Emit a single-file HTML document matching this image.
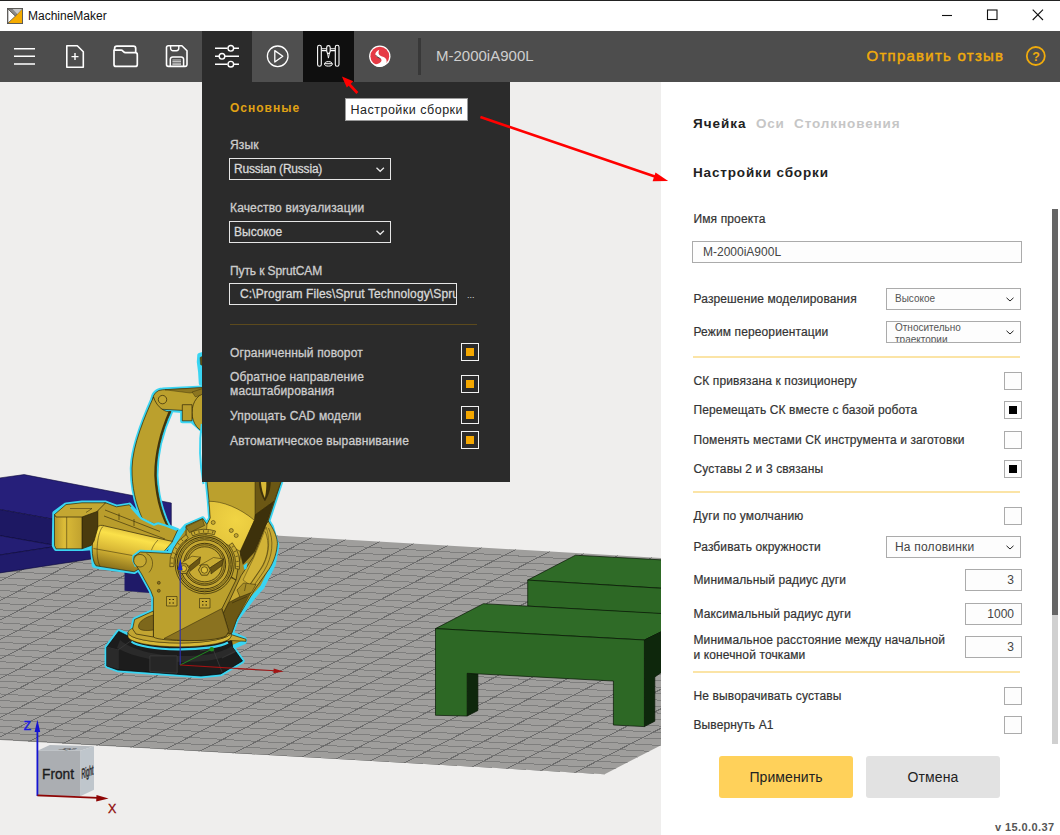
<!DOCTYPE html>
<html lang="ru">
<head>
<meta charset="utf-8">
<title>MachineMaker</title>
<style>
*{box-sizing:border-box;margin:0;padding:0}
html,body{width:1060px;height:835px;overflow:hidden;background:#efeeed}
body{font-family:"Liberation Sans",sans-serif;font-size:12px;color:#333;position:relative}
.abs{position:absolute}
#titlebar{left:0;top:0;width:1060px;height:31px;background:#fff;border-top:1px solid #222}
#titlebar .ttl{left:28px;top:7px;font-size:12px;color:#111;line-height:16px;white-space:nowrap}
#toolbar{left:0;top:31px;width:1060px;height:51px;background:#4d4d4d}
.tb{top:0;height:51px;width:51px}
#viewport{left:0;top:82px;width:661px;height:753px;background:#efeeed;overflow:hidden}
#drop{left:202px;top:82px;width:308px;height:399.500px;background:#2b2b2b;color:#cfcfcf}
#drop .lbl{left:28px;white-space:nowrap;font-size:12px;line-height:14px;color:#cdcdcd;letter-spacing:.15px;-webkit-text-stroke:.3px #cdcdcd}
#drop .sel{left:27px;height:22px;border:1px solid #e6e6e6;color:#d8d8d8;font-size:12px;line-height:20px;padding-left:4px;white-space:nowrap;overflow:hidden;-webkit-text-stroke:.3px #d8d8d8}
#drop .cb{left:259px;width:18px;height:18px;border:1px solid #f2f2f2}
#drop .cb i{position:absolute;left:4px;top:4px;width:8px;height:8px;background:#f5a800}
#right{left:661px;top:82px;width:399px;height:753px;background:#fff}
#right .lbl{left:32.500px;white-space:nowrap;font-size:12px;line-height:14px;color:#333;letter-spacing:.12px;-webkit-text-stroke:.2px #333}
#right .hr{left:32px;width:327px;height:2px;background:#fbe4a6}
#right .cb{left:343px;width:18px;height:18px;border:1px solid #ababab;background:#fdfdfd}
#right .cb i{position:absolute;left:4px;top:4px;width:8px;height:8px;background:#000}
#right .inp{border:1px solid #ababab;background:#fdfdfd;color:#444;white-space:nowrap;overflow:hidden}
</style>
</head>
<body>
<!-- TITLEBAR -->
<div id="titlebar" class="abs">
<svg class="abs" style="left:7px;top:6.500px" width="16" height="16" viewBox="0 0 17 17"><rect x=".5" y=".5" width="16" height="16" fill="#f5ab00" stroke="#555"/><polygon points="1,1 1,16 9,8.5" fill="#fff" stroke="#555" stroke-width=".8"/><polygon points="1,1 16,1 9,8.5" fill="#8a8a8a" stroke="#555" stroke-width=".8"/><polygon points="6,1 16,1 11,6.4" fill="#c9c9c9"/></svg>
<div class="abs ttl">MachineMaker</div>
<svg class="abs" style="left:930px;top:0" width="130" height="30" viewBox="0 0 130 30" fill="none" stroke="#111" stroke-width="1.1"><path d="M12 14.5h10"/><rect x="57.5" y="9" width="9.5" height="9.500"/><path d="M102.700 8.700l10.300 10.300M113 8.700l-10.300 10.300"/></svg>
</div>
<!-- TOOLBAR -->
<div id="toolbar" class="abs">
<div class="abs tb" style="left:202px;background:#2b2b2b"></div>
<div class="abs tb" style="left:252px;background:#4f4f4f;width:52px"></div>
<div class="abs tb" style="left:303px;background:#0f0f0f"></div>
<div class="abs" style="left:418px;top:7px;width:3px;height:37px;background:#383838"></div>
<div class="abs" id="ptitle" style="left:436px;top:16px;font-size:15px;line-height:18px;color:#cfcfcf;white-space:nowrap;letter-spacing:0">M-2000iA900L</div>
<div class="abs" id="fb" style="left:866.500px;top:16px;font-size:15px;line-height:18px;color:#f0ab0c;white-space:nowrap;-webkit-text-stroke:.45px #f0ab0c;letter-spacing:1.250px">Отправить отзыв</div>
<svg class="abs" style="left:0;top:0" width="1060" height="51" viewBox="0 31 1060 51" fill="none" stroke="#fff" stroke-width="1.6">
<g id="ico-menu"><path d="M14 48.700h21M14 56.300h21M14 64h21" stroke-width="1.500"/></g>
<g id="ico-new"><path d="M66.800 45.800h10.500l6 6v15.400h-16.500z" stroke-linejoin="round"/><path d="M71.500 56.600h7M75 53.100v7" stroke-width="1.400"/></g>
<g id="ico-open" stroke-width="1.700" stroke-linejoin="round"><path d="M114.600 50v-1.500a2.300 2.300 0 0 1 2.300-2.300h16.500a2.300 2.300 0 0 1 2.300 2.300v4"/><path d="M114 50.200h7.200c1.800 0 2.200 2.500 4.300 2.500h9.800a2 2 0 0 1 2 2v9.700a2 2 0 0 1-2 2h-19.300a2 2 0 0 1-2-2z"/></g>
<g id="ico-save" stroke-width="1.600" stroke-linejoin="round"><path d="M168.300 45.700h13.600l5.100 5.100v13.800a1.800 1.800 0 0 1-1.800 1.800h-16.900a1.800 1.800 0 0 1-1.800-1.800v-17.100a1.800 1.800 0 0 1 1.800-1.800z"/><path d="M170.600 45.700v2.600a2.400 2.400 0 0 0 2.400 2.400h3.400a2.400 2.400 0 0 0 2.400-2.400v-2.600" stroke-width="1.400"/><path d="M170.300 66.300v-7a2.400 2.400 0 0 1 2.400-2.400h8.500a2.400 2.400 0 0 1 2.400 2.400v7" stroke-width="1.500"/><path d="M172.400 60h8.600M172.400 61.600h8.600M172.400 63.200h8.600M172.400 64.700h8.600" stroke-width=".9" stroke="#ddd"/></g>
<g id="ico-set"><path d="M215 48.300h12.500M234 48.300h5M215 56.300h4M225 56.300h14M215 64.200h12.500M234 64.200h5" stroke-width="1.600"/><circle cx="230.800" cy="48.300" r="2.800" stroke-width="1.400"/><circle cx="222" cy="56.300" r="2.800" stroke-width="1.400"/><circle cx="230.800" cy="64.200" r="2.800" stroke-width="1.400"/></g>
<g id="ico-play"><circle cx="277.700" cy="56.300" r="10.300" stroke-width="1.300"/><path d="M274.800 50.600v11.400l8-5.700z" stroke-width="1.300" stroke-linejoin="round"/></g>
<g id="ico-cell" stroke-width="1.100"><rect x="317.600" y="45.300" width="3.700" height="21" rx="1.800"/><rect x="335.300" y="45.300" width="3.700" height="21" rx="1.800"/><path d="M321.500 48.700h5M330.400 48.700h4.800M321.500 50.600h5M330.400 50.600h4.800"/><path d="M326.700 47.500a1.750 1.900 0 0 1 3.500 0v3.700l-.8 2.200h-1.900l-.8-2.200z"/><path d="M327.500 53.400l.95 4.700.95-4.700" stroke-width=".9"/><path d="M324.500 64.200c0-1.600 1.300-2.600 3.900-2.600s3.900 1 3.900 2.600c0 1.300-1.600 1.900-3.900 1.900s-3.900-.6-3.900-1.900zM324.800 63.700h7.200" stroke-width="1"/></g>
<g id="ico-s" stroke="none"><circle cx="379.800" cy="56.200" r="10.700" fill="#fff"/><circle cx="379.800" cy="56.200" r="9.400" fill="#e63a45"/><path d="M379.300 49.800c-2.600 1.200-4.300 3-3.900 4.900.5 2.200 3.200 2.800 5 3.900 1.400.9 1.500 2.100.4 3.300-1.800 1.800-5 2.500-7.600 2.600a9.400 9.400 0 0 0 12.800.1c.8-2.100 1.300-4.800-.8-6.600-1.700-1.500-4.700-1.600-6-3.200-1.100-1.400-.6-3.400.1-5z" fill="#fff"/><path d="M375.800 55.200c.9 1.900 3.100 2.400 4.700 3.500" stroke="#222" stroke-width=".8" fill="none"/></g>
<g id="ico-help" stroke="#f0ab0c"><circle cx="1035.800" cy="56" r="9" stroke-width="1.800"/></g>
</svg>
<div class="abs" style="left:1030px;top:17.500px;width:12px;text-align:center;font-size:12.500px;line-height:16px;font-weight:bold;color:#f0ab0c">?</div>
</div>
<!-- VIEWPORT -->
<div id="viewport" class="abs">
<svg id="scene" class="abs" style="left:0;top:0" width="661" height="753" viewBox="0 82 661 753">
<defs><clipPath id="fc"><polygon points="-40,516.9 700,560.3 700,725.1 604.6,774.2 -40,737.7"/></clipPath>
<linearGradient id="gm" x1="0" y1="0" x2="0" y2="1"><stop offset="0" stop-color="#d9bb3a"/><stop offset=".25" stop-color="#f7dc45"/><stop offset=".6" stop-color="#d8b636"/><stop offset="1" stop-color="#8f7420"/></linearGradient>
<linearGradient id="gc" x1="0" y1="0" x2="1" y2="0"><stop offset="0" stop-color="#c8a730"/><stop offset=".45" stop-color="#d2b135"/><stop offset="1" stop-color="#7d6519"/></linearGradient>
</defs>
<polygon points="-40,516.9 700,560.3 700,725.1 604.6,774.2 -40,737.7" fill="#9f9e9c"/>
<g clip-path="url(#fc)" fill="none" shape-rendering="crispEdges"><path d="M-40 523.4 L700 566.6M-40 529.9 L700 573.1M-40 536.4 L700 579.6M-40 542.8 L700 586.1M-40 549.3 L700 592.5M-40 555.8 L700 599M-40 562.2 L700 605.5M-40 568.7 L700 611.9M-40 575.2 L700 618.4M-40 581.7 L700 624.9M-40 588.1 L700 631.3M-40 594.6 L700 637.8M-40 601.1 L700 644.3M-40 607.5 L700 650.8M-40 614 L700 657.2M-40 620.5 L700 663.7M-40 626.9 L700 670.2M-40 633.4 L700 676.6M-40 639.9 L700 683.1M-40 646.4 L700 689.6M-40 652.8 L700 696M-40 659.3 L700 702.5M-40 665.8 L700 709M-40 672.2 L700 715.5M-40 678.7 L700 721.9M-40 685.2 L700 728.4M-40 691.6 L700 734.9M-40 698.1 L700 741.3M-40 704.6 L700 747.8M-40 711.1 L700 754.3M-40 717.5 L700 760.7M-40 724 L700 767.2M-40 730.5 L700 773.7M-40 736.9 L700 780.2M-40 743.4 L700 786.6M-40 749.9 L700 793.1M-40 756.3 L700 799.6M-40 762.8 L700 806M-40 769.3 L700 812.5M-40 775.8 L700 819M-40 782.2 L700 825.4" stroke="#7e7e7d" stroke-width="1"/>
<path d="M-96.3 513.6L-616.3 781.4M-62.3 515.6L-582.3 783.4M-28.3 517.6L-548.3 785.4M5.7 519.6L-514.3 787.4M39.7 521.6L-480.3 789.4M73.7 523.6L-446.3 791.4M107.7 525.6L-412.3 793.4M141.7 527.6L-378.3 795.4M175.7 529.6L-344.3 797.4M209.7 531.6L-310.3 799.4M243.7 533.6L-276.3 801.4M277.7 535.6L-242.3 803.4M311.7 537.6L-208.3 805.4M345.7 539.6L-174.3 807.4M379.7 541.5L-140.3 809.3M413.7 543.5L-106.3 811.3M447.7 545.5L-72.3 813.3M481.7 547.5L-38.3 815.3M515.7 549.5L-4.3 817.3M549.7 551.5L29.7 819.3M583.7 553.5L63.7 821.3M617.7 555.5L97.7 823.3M651.7 557.5L131.7 825.3M685.7 559.5L165.7 827.3M719.7 561.5L199.7 829.3M753.7 563.5L233.7 831.3M787.7 565.5L267.7 833.3M821.7 567.4L301.7 835.2M855.7 569.4L335.7 837.2M889.7 571.4L369.7 839.2M923.7 573.4L403.7 841.2M957.7 575.4L437.7 843.2M991.7 577.4L471.7 845.2M1025.7 579.4L505.7 847.2M1059.7 581.4L539.7 849.2M1093.7 583.4L573.7 851.2M1127.7 585.4L607.7 853.2M1161.7 587.4L641.7 855.2M1195.7 589.4L675.7 857.2M1229.7 591.4L709.7 859.2M1263.7 593.3L743.7 861.1M1297.7 595.3L777.7 863.1M1331.7 597.3L811.7 865.1M1365.7 599.3L845.7 867.1M1399.7 601.3L879.7 869.1M1433.7 603.3L913.7 871.1" stroke="#6c6c6c" stroke-width="1"/></g>

<g stroke="#0d0a3a" stroke-width=".6" stroke-linejoin="round">
<polygon points="-2,478.200 24.100,474.600 171.300,503 171.300,540 53,519.200 -2,509.200" fill="#261f7a"/>
<polygon points="-2,509.200 53,519.200 171.300,540 124,545 53,545 -2,535.300" fill="#1d1863"/>
<polygon points="124.500,540 171.300,540 171.300,594.800 124.500,590.800" fill="#1f1a68" stroke="none"/>
<polygon points="-2,535.300 53,545 56,546.400 -2,555.300" fill="#241e74"/>
<polygon points="-2,555.300 56,546.400 124,545 124,554 -2,573.200" fill="#201b6b"/>
</g>

<g stroke="#071505" stroke-width=".7" stroke-linejoin="round">
<polygon points="527.700,580.100 575.500,555.200 662,559.900 662,588.300" fill="#2f6b27"/>
<polygon points="527.700,580.100 662,588.300 662,614 527.700,606.100" fill="#2d6825"/>
<polygon points="435.500,628.600 483.400,603.700 662,613.500 662,631.400 644.400,640" fill="#2f6b27"/>
<polygon points="644.400,640 662,631.400 662,672 654.800,677 654.800,721.200 644.400,726.600" fill="#0e270c"/>
<polygon points="467.200,673.300 477.900,673.900 477.900,710.500 467.200,716" fill="#0e270c"/>
<polygon points="435.500,628.600 644.400,640 644.400,726.600 613.400,725 613.400,681 467.200,673.300 467.200,716 435.500,715.300" fill="#2d6825"/>
</g>


<defs>
<g id="sil">
<path d="M153.500 397C145 416 132.500 445 132 468C131.800 487 135.500 503 142.500 519L171 531C163 517 157.500 498 156.300 476C156 455 161.500 432 171 411.500Z"/>
<path d="M162.500 389.800L203 387.600V431L192 421H182.300V410.700L162.500 409.300A9.700 9.700 0 0 1 162.500 389.800Z"/>
<path d="M199.500 355L203 354V383.500H201L200.300 372 199 362Z"/>
<path d="M54.500 513L66 504.600 82 502.800 105.600 502.800 116.400 506.800 129.300 504.800 141.500 518.500 154 524.700 158.100 523 166.400 525.800 177.500 530.300 172.500 541 160 555 134.200 571.800 100 567 94 565.500 92 548 82 548.800 56 548.800 54 545.500Z"/>
<path d="M207 481H281.300L268.200 521 271.700 526.600 277.200 545.500 273.600 564.300 262.300 587 254.400 595.800 236.600 619.500 231.600 633.400 244.500 639 244.500 642 232.600 647.300 242.500 661 220.700 674 201 676 117.700 670 106.800 666 106.800 647.300 118.700 631.400 128.600 635 132.600 629 134.600 619.500 153.400 611 153.400 597.700 150.800 590.800 141 573 134 562 134 556.500 140.500 552 169.500 553.500 172.600 541 186.100 525.800 202.700 518.500 207 524.500 210.300 518 209 501Z"/>
</g>
<linearGradient id="gmot" gradientUnits="userSpaceOnUse" x1="128" y1="527" x2="118" y2="572"><stop offset="0" stop-color="#d6b636"/><stop offset=".22" stop-color="#fbe14a"/><stop offset=".55" stop-color="#d9b836"/><stop offset="1" stop-color="#806818"/></linearGradient>
<linearGradient id="gcw" gradientUnits="userSpaceOnUse" x1="54" y1="0" x2="83" y2="0"><stop offset="0" stop-color="#b3952a"/><stop offset=".35" stop-color="#dcbc38"/><stop offset="1" stop-color="#bfa02e"/></linearGradient>
<radialGradient id="gdome" gradientUnits="userSpaceOnUse" cx="236" cy="520" r="46"><stop offset="0" stop-color="#f1d444"/><stop offset="1" stop-color="#dcbc38"/></radialGradient>
</defs>
<use href="#sil" fill="#a88e28" stroke="#3ad5f2" stroke-width="4.400" stroke-linejoin="round"/>
<g stroke="#2e2508" stroke-width=".7" stroke-linejoin="round">

<path d="M199.500 355L203 354V383.500H201L200.300 372 199 362Z" fill="#3ad5f2" stroke="none"/><path d="M200 357.500L203 356V366L200.500 364.500Z" fill="#5e4c12" stroke-width=".4"/>
<path d="M162.500 389.800L203 387.600V411.500L162.500 409.300A9.700 9.700 0 0 1 162.500 389.800Z" fill="#bba02d"/>
<path d="M165 389.800L203 387.600V391L190 393Z" fill="#8d7620" stroke-width=".4"/>
<circle cx="162.500" cy="399.600" r="4.200" fill="#c2a631"/>
<ellipse cx="208" cy="412.500" rx="16" ry="20" fill="#bba02d"/>
<path d="M192 392L203 388.500V394L195.500 397Z" fill="#8d7620" stroke-width=".4"/>
<rect x="182.300" y="404.700" width="9.700" height="16.100" fill="#b99d2c"/>
<path d="M201.800 424C199.300 440 199.500 462 203.500 484" fill="none" stroke="#3ad5f2" stroke-width="2"/>

<path d="M153.500 397C145 416 132.500 445 132 468C131.800 487 135.500 503 142.500 519L171 531C163 517 157.500 498 156.300 476C156 455 161.500 432 171 411.500C166 413 157 408 153.500 397Z" fill="#bba02d"/>
<path d="M171 411.500C161.500 432 156 455 156.300 476C157.500 498 163 517 171 531L168.800 530C161 517 155.300 498 154.300 476C154 455 159.500 432 168.800 411Z" fill="#3f330c" stroke="none"/>

<path d="M97 505L105.600 502.800 116.400 506.800 129.300 504.800 141.500 518.500 154 524.700 158.100 523 166.400 525.800 177.500 530.300 172.500 541 160 548 104 527 97 540Z" fill="#b99d2c"/>
<path d="M105 510L160 531.500M104 516L165 539M119 513.500V520M134 519V526" fill="none" stroke-width=".6"/>
<path d="M131 507L141.500 518.500 154 524.700 158.100 523.200 166.400 525.800 177 530" fill="none" stroke="#3ad5f2" stroke-width="2.200" stroke-linejoin="round"/>

<path d="M104.200 525.800L162.300 539.200 172.600 541.500 160 556 134.200 571.800 96 565.800C91 560 90.500 537 97 527.500C99 525 102 525 104.200 525.800Z" fill="url(#gmot)"/>
<path d="M93.500 548.500L132.500 555.500M158 540C153 545 150.500 551 150 557M103.500 526C97.500 530 94.500 556 100 566.300" fill="none" stroke-width=".5"/>

<path d="M82 513L97.800 506V528L94 541 91 545.500 82 548.800Z" fill="#4a3b0e"/>
<path d="M54.500 514.500V545.500L56 548.800H82V516Z" fill="url(#gcw)"/>
<path d="M54.500 514.500L66 504.600 82 502.800 105.600 502.800 97 511.500 82 517H56Z" fill="#c4a732"/>
<path d="M66.700 517V548.800M70 508.500H92L86 512.500" fill="none" stroke-width=".5"/>
</g>

<g stroke="#2e2508" stroke-width=".7" stroke-linejoin="round">

<path d="M118.700 631.400L106.800 647.300V666L117.700 670 201 676 220.700 674 242.500 661 232.600 647.300 231 636 128 636Z" fill="#1c1c1c" stroke="#000"/>
<path d="M120 640C135 652 160 656 185 656S222 652 232 646L236 652C224 659 205 662 183 662S135 658 117 648Z" fill="#2a2a2a" stroke="none"/><path d="M106.800 647.300L118 650 132 640M118 650V669M150 656H177V673L150 671.500ZM200 651L213 649 222 672M222 658L236 651" fill="none" stroke="#3a3a3a" stroke-width=".8"/>
<path d="M150 656H177V673L150 671.500Z" fill="#262626" stroke="#3a3a3a"/>
<path d="M106.800 647.300L118 650V669L106.800 666Z" fill="#2a2a2a" stroke="none"/>

<path d="M131.500 641.500A50 10 0 0 0 228 642.500" fill="none" stroke="#3ad5f2" stroke-width="2.200"/>
<path d="M128 632.500V636.300A51.500 10.500 0 0 0 231 636.300V634.500L246 639.300V641.300L230 640.500" fill="#c8aa33"/>
<path d="M128 632.500A51.500 10.500 0 0 0 231 632.500L231 636.300A51.500 10.500 0 0 1 128 636.300Z" fill="#d6b838" stroke-width=".5"/>
<path d="M128 632.500A51.500 10.500 0 0 1 231 632.500A51.500 10.500 0 0 1 128 632.500Z" fill="#c2a531" stroke-width=".5"/>

<path d="M268.200 521L271.700 526.600C276 534 278 541 277.200 545.500C276.500 555 272 566 267 572L255.600 588 236.600 619.500 231.600 633.400 226 634 223 614 228.700 602.600 241 575.800 253.600 556.600 266 524Z" fill="#c8aa33"/>
<path d="M259 545L266 527C270 538 270 552 263 566L250 585 243 580 253.600 558Z" fill="#d2b337" stroke-width=".4"/>
<path d="M268.500 528C274 540 273 556 264 571L251.500 589M265.300 531.500C270 543 268.700 556 260.500 569L248.500 586.500" fill="none" stroke-width=".5"/>
<path d="M223 614L228.700 602.600 240 596.500 251 592.500 243 607 236.600 619.500 231.600 633.400 226 634Z" fill="#6b5714" stroke-width=".5"/>
<path d="M237 590L243.500 583 256 584.500 251.500 592.500 240 597Z" fill="#a88e28" stroke-width=".5"/>
<path d="M246 584L244.500 591M232 603L247 596.500" fill="none" stroke-width=".5"/>

<path d="M136 566.500L133.500 561 133.500 556 140 551 170.500 552.300 176 541.500 183 531" fill="none" stroke="#3ad5f2" stroke-width="2.400" stroke-linejoin="round"/>
<path d="M134 556.500L140.500 552 169.500 553.500 186 556 236 580 222 608.600 228.700 631.400 226 636C215 642 160 642 153.400 637V597.700L150.800 590.800 141 573 134 562Z" fill="#bba02d"/>
<path d="M164 638.500L221.700 608.600 228.700 631.400 226 636C215 641 185 642 164 638.500Z" fill="#8a7220" stroke-width=".5"/>

<path d="M153.400 611L134.600 619.500 132.600 629 136 634 153.400 637Z" fill="#c2a531"/>
<path d="M153.400 615C146 617 139 621 138.500 626S146 631 153.400 630Z" fill="#7d671b" stroke-width=".5"/>

<circle cx="140" cy="560.700" r="6.300" fill="#c6a932" stroke-width=".6"/>
<path d="M146.500 553.500C153 556 155 566 149 572.500" fill="none" stroke-width=".5"/>
<circle cx="158.800" cy="582.800" r="1.500" fill="#8a7220" stroke-width=".5"/><circle cx="158.800" cy="590.800" r="1.500" fill="#8a7220" stroke-width=".5"/>
<rect x="166.500" y="596.500" width="10.500" height="9.500" fill="#c6a932" stroke-width=".6"/><rect x="199.500" y="598.500" width="10.500" height="9.500" fill="#c6a932" stroke-width=".6"/>
<path d="M169 599.500h1.500m2 0h1.500m-5 3.500h1.500m2 0h1.500M202 601.500h1.500m2 0h1.500m-5 3.500h1.500m2 0h1.500" stroke-width="1.200" fill="none"/>

<path d="M207 481H281.300L268.200 521 262 530 241.500 549 236 580 186.100 545 186.100 525.800 202.700 518.500 207 524.500 210.300 518 209 501Z" fill="#bba02d"/>
<path d="M209 501.300C222 501 240 508 254.400 520.300L241 551.600 226 544C214 538 206 536 206 536L207 524.500 210.300 518Z" fill="url(#gdome)" stroke-width=".5"/>
<path d="M255 481H281.300L274 501.300 255 515Z" fill="#6b5714" stroke-width=".5"/><path d="M274 501.300L268 519.700 254.400 552 243 564.300 240 551.600 254.400 520.300 255 515Z" fill="#3d310b" stroke-width=".5"/>
<path d="M259.300 481H270.400C270.400 490 267.800 496 264.900 500.700C261.800 496 259.300 489 259.300 481Z" fill="#3f330c" stroke-width=".5"/>
<path d="M260.800 481C261.300 488 263 494 264.900 498C266 493 266.500 487 266.300 481Z" fill="#d9b936" stroke="none"/>
<circle cx="213.200" cy="522.500" r="2" fill="#c6a932" stroke-width=".5"/><circle cx="231.300" cy="530.500" r="2" fill="#c6a932" stroke-width=".5"/><circle cx="236.200" cy="535.500" r="2" fill="#c6a932" stroke-width=".5"/>
<path d="M243.500 565.500L247.500 562.500 246.500 568.500 244.500 570Z" fill="#3ad5f2" stroke="none"/>

<path d="M185.800 527L202.300 519 204.500 525.500 189.500 532.500Z" fill="#8d7620" stroke-width=".5"/>

<path d="M169.8 566.7A35 35 0 0 1 186.2 534.6L188.3 538.0A31 31 0 0 0 173.8 566.5Z" fill="#c6a932" stroke-width=".6"/>
<path d="M191.0 532.1A35 35 0 0 1 215.5 531.0L214.3 534.8A31 31 0 0 0 192.6 535.8Z" fill="#c6a932" stroke-width=".6"/>
<path d="M232.3 542.8A35 35 0 0 1 239.4 569.2L235.4 568.6A31 31 0 0 0 229.1 545.2Z" fill="#c6a932" stroke-width=".6"/>
<path d="M172.9 563.2L170.5 563.1M173.5 558.2L171.1 557.8M174.8 553.4L172.6 552.6M176.9 548.9L174.8 547.7M179.6 544.7L177.8 543.2M183.0 541.0L181.4 539.3M194.9 534.1L194.1 531.8M199.2 533.0L198.8 530.6M203.6 532.5L203.5 530.1M208.0 532.7L208.3 530.3M212.4 533.4L213.0 531.1M231.7 547.4L233.7 546.2M234.0 551.9L236.2 550.9M235.6 556.6L237.9 556.0M236.4 561.5L238.8 561.3M236.4 566.5L238.8 566.7" fill="none" stroke-width=".6"/>

<circle cx="204.700" cy="564.300" r="29.500" fill="#b59a2b" stroke-width=".7"/><circle cx="204.700" cy="564.300" r="27.500" fill="#bba02d" stroke-width=".9"/><circle cx="204.700" cy="564.300" r="26" fill="none" stroke-width=".5"/>
<circle cx="204.700" cy="564.300" r="24.500" fill="#c3a631" stroke-width=".8"/>
<circle cx="204.700" cy="564.300" r="21" fill="#b3972a" stroke-width=".8"/>
<circle cx="204.700" cy="564.300" r="19.500" fill="none" stroke-width=".6"/><circle cx="204.700" cy="564.300" r="17.500" fill="#c8ab33" stroke-width=".7"/>
<path d="M179 564.500L192 556.200 200.500 557.200 189.500 566Z" fill="#c9ac33" stroke-width=".5"/><path d="M189.500 566L200.500 557.200 199.500 563.500 189.800 571.500Z" fill="#6b5714" stroke-width=".5"/><path d="M199.500 565.500L213.500 557.500 223.500 559 210.500 567.500Z" fill="#c9ac33" stroke-width=".5"/><path d="M210.500 567.500L223.500 559 222 565.500 211 574Z" fill="#6b5714" stroke-width=".5"/><polygon points="189.2,568.6 186.4,573.4 180.8,573.4 178.0,568.6 180.8,563.8 186.4,563.8" fill="#c4a731" stroke-width=".7"/><circle cx="183.600" cy="568.600" r="3" fill="#dcbe3a" stroke-width=".6"/><polygon points="210.4,570.0 207.4,575.2 201.4,575.2 198.4,570.0 201.4,564.8 207.4,564.8" fill="#c4a731" stroke-width=".7"/><circle cx="204.400" cy="570" r="3.200" fill="#dcbe3a" stroke-width=".6"/>
</g>

<path d="M180.200 665V567" stroke="#2b2fb0" stroke-width="1.100" fill="none"/><polygon points="180.200,558.500 177.800,570 182.600,570" fill="#1d2cc4"/>
<path d="M180.200 665L211.800 649.200" stroke="#1f8a1f" stroke-width="1" fill="none"/><circle cx="211.800" cy="649.200" r="2.300" fill="#1f8a1f"/>
<path d="M180.200 665L275 670.800" stroke="#a31212" stroke-width="1.100" fill="none"/><polygon points="283.700,671.400 273.700,668.500 273.400,673.300" fill="#a31212"/>


<g>
<polygon points="37.400,750.800 49.800,744.900 94,746.200 80.200,750.800" fill="#b7bcc1"/>
<polygon points="80.200,750.800 94,746.200 94,789.700 80.200,796.300" fill="#bfc6cc"/>
<rect x="37.400" y="750.800" width="42.800" height="45.500" fill="#abaeb2"/>
<text transform="translate(42,778.500) scale(.94,1)" font-family="'Liberation Sans',sans-serif" font-size="14.600" fill="#1c1c1c" stroke="#1c1c1c" stroke-width=".35">Front</text>
<text transform="translate(81.600,778.800) skewY(-20) scale(.36,1)" font-family="'Liberation Sans',sans-serif" font-size="14" fill="#222" stroke="#222" stroke-width=".5">Right</text>
<text transform="translate(56,749.700) scale(1,.3) skewX(-55)" font-family="'Liberation Sans',sans-serif" font-size="9" font-weight="bold" fill="#2a2a2a">Top</text>
<path d="M37.400 796V729" stroke="#1414d2" stroke-width="1.800" fill="none"/>
<polygon points="37.400,719.800 34.600,732 40.200,732" fill="#1414d2"/>
<path d="M37.400 795.300L98 797.900" stroke="#8e0505" stroke-width="1.800" fill="none"/>
<polygon points="108.600,798.500 96.500,795 96.200,801.400" fill="#8e0505"/>
<text x="23.800" y="729.900" font-family="'Liberation Sans',sans-serif" font-size="12" fill="#1a1ae0" stroke="#1a1ae0" stroke-width=".4">Z</text>
<text x="108" y="812.900" font-family="'Liberation Sans',sans-serif" font-size="12.500" fill="#8e0a0a" stroke="#8e0a0a" stroke-width=".3">X</text>
</g>

</svg>
</div>
<!-- DROPDOWN PANEL -->
<div id="drop" class="abs">
<div class="abs" id="d-h" style="left:28px;top:18px;font-size:12px;line-height:16px;font-weight:bold;color:#e0a214;letter-spacing:1px;white-space:nowrap">Основные</div>
<div class="abs lbl" id="d-l1" style="top:56px">Язык</div>
<div class="abs sel" style="top:76px;width:162px"><span id="d-s1" style="letter-spacing:-.2px">Russian (Russia)</span></div>
<div class="abs lbl" id="d-l2" style="top:119px">Качество визуализации</div>
<div class="abs sel" style="top:139px;width:162px"><span id="d-s2">Высокое</span></div>
<div class="abs lbl" id="d-l3" style="top:182px;letter-spacing:-.1px">Путь к SprutCAM</div>
<div class="abs sel" style="top:201px;width:228px;padding-left:10px"><span id="d-s3" style="letter-spacing:.12px">C:\Program Files\Sprut Technology\SprutCAM 15</span></div>
<div class="abs" style="left:265px;top:206px;font-size:9px;line-height:14px;color:#ddd;letter-spacing:0">...</div>
<svg class="abs" style="left:0;top:0" width="308" height="399" viewBox="202 82 308 399" fill="none" stroke="#e8e8e8" stroke-width="1.300"><path d="M376.500 167.800l3.700 3.500 3.700-3.500M376.500 230.800l3.700 3.500 3.700-3.500"/></svg>
<div class="abs" style="left:28px;top:242px;width:247px;height:1px;background:#5c4a1d"></div>
<div class="abs lbl" id="d-c1" style="top:264px">Ограниченный поворот</div>
<div class="abs lbl" id="d-c2" style="top:288px">Обратное направление<br>масштабирования</div>
<div class="abs lbl" id="d-c3" style="top:327px">Упрощать CAD модели</div>
<div class="abs lbl" id="d-c4" style="top:352px">Автоматическое выравнивание</div>
<div class="abs cb" style="top:261px"><i></i></div>
<div class="abs cb" style="top:293px"><i></i></div>
<div class="abs cb" style="top:324px"><i></i></div>
<div class="abs cb" style="top:349px"><i></i></div>
</div>
<!-- RIGHT PANEL -->
<div id="right" class="abs">
<div class="abs" id="r-t1" style="left:32px;top:33.500px;font-size:13.500px;line-height:16px;font-weight:bold;color:#222;letter-spacing:1px;white-space:nowrap">Ячейка</div>
<div class="abs" id="r-t2" style="left:95px;top:33.500px;font-size:13.500px;line-height:16px;font-weight:bold;color:#c6c6c6;letter-spacing:.8px;white-space:nowrap">Оси</div>
<div class="abs" id="r-t3" style="left:133px;top:33.500px;font-size:13.500px;line-height:16px;font-weight:bold;color:#c6c6c6;letter-spacing:.9px;white-space:nowrap">Столкновения</div>
<div class="abs" id="r-h" style="left:32px;top:82.500px;font-size:13.500px;line-height:16px;font-weight:bold;color:#222;letter-spacing:.85px;white-space:nowrap">Настройки сборки</div>
<div class="abs lbl" id="r-l1" style="top:130px">Имя проекта</div>
<div class="abs inp" style="left:31px;top:159px;width:330px;height:22px;font-size:12px;line-height:20px;padding-left:10px;color:#444"><span id="r-i1">M-2000iA900L</span></div>
<div class="abs lbl" id="r-l2" style="top:210px">Разрешение моделирования</div>
<div class="abs inp" style="left:225px;top:206px;width:135px;height:22px;font-size:10px;line-height:20px;padding-left:8px;color:#555"><span id="r-s1">Высокое</span></div>
<div class="abs lbl" id="r-l3" style="top:243px">Режим переориентации</div>
<div class="abs inp" style="left:225px;top:239px;width:135px;height:22px;font-size:10px;line-height:11.500px;padding-left:8px;color:#555;white-space:normal"><span id="r-s2">Относительно<br>траектории</span></div>
<div class="abs hr" style="top:274px"></div>
<div class="abs lbl" id="r-c1" style="top:292px">СК привязана к позиционеру</div>
<div class="abs cb" style="top:290px"></div>
<div class="abs lbl" id="r-c2" style="top:321px">Перемещать СК вместе с базой робота</div>
<div class="abs cb" style="top:319px"><i></i></div>
<div class="abs lbl" id="r-c3" style="top:351px">Поменять местами СК инструмента и заготовки</div>
<div class="abs cb" style="top:349px"></div>
<div class="abs lbl" id="r-c4" style="top:380px">Суставы 2 и 3 связаны</div>
<div class="abs cb" style="top:378px"><i></i></div>
<div class="abs hr" style="top:409px"></div>
<div class="abs lbl" id="r-c5" style="top:427px">Дуги по умолчанию</div>
<div class="abs cb" style="top:425px"></div>
<div class="abs lbl" id="r-l4" style="top:458px">Разбивать окружности</div>
<div class="abs inp" style="left:225px;top:454px;width:135px;height:22px;font-size:12px;line-height:20px;padding-left:8px;color:#444;letter-spacing:.2px"><span id="r-s3">На половинки</span></div>
<div class="abs lbl" id="r-l5" style="top:491px">Минимальный радиус дуги</div>
<div class="abs inp" style="left:304px;top:487px;width:57px;height:22px;font-size:12px;line-height:20px;padding-right:7px;text-align:right">3</div>
<div class="abs lbl" id="r-l6" style="top:525px">Максимальный радиус дуги</div>
<div class="abs inp" style="left:304px;top:521px;width:57px;height:22px;font-size:12px;line-height:20px;padding-right:7px;text-align:right">1000</div>
<div class="abs lbl" id="r-l7" style="top:551px;line-height:15px">Минимальное расстояние между начальной<br>и конечной точками</div>
<div class="abs inp" style="left:304px;top:554px;width:57px;height:22px;font-size:12px;line-height:20px;padding-right:7px;text-align:right">3</div>
<div class="abs hr" style="top:589px"></div>
<div class="abs lbl" id="r-c6" style="top:607px">Не выворачивать суставы</div>
<div class="abs cb" style="top:605px"></div>
<div class="abs lbl" id="r-c7" style="top:636px">Вывернуть A1</div>
<div class="abs cb" style="top:634px"></div>
<svg class="abs" style="left:0;top:0" width="399" height="753" viewBox="661 82 399 753" fill="none" stroke="#222" stroke-width="1"><path d="M1006.500 297.800l3.500 3.200 3.500-3.200M1006.500 330.800l3.500 3.200 3.500-3.200M1006.500 545.800l3.500 3.200 3.500-3.200"/></svg>
<div class="abs" style="left:391px;top:127px;width:6px;height:406px;background:#666"></div>
<div class="abs" style="left:391px;top:533px;width:6px;height:129px;background:#d0d0d0"></div>
<div class="abs" id="b-ok" style="left:58px;top:674px;width:134px;height:42px;border-radius:3px;background:#ffd15a;color:#222;font-size:14px;line-height:42px;text-align:center;letter-spacing:.1px">Применить</div>
<div class="abs" id="b-no" style="left:205px;top:674px;width:134px;height:42px;border-radius:3px;background:#e2e2e2;color:#222;font-size:14px;line-height:42px;text-align:center;letter-spacing:.1px">Отмена</div>
<div class="abs" id="r-v" style="left:334px;top:738px;font-size:11px;line-height:14px;font-weight:bold;color:#555;letter-spacing:.4px;white-space:nowrap">v 15.0.0.37</div>
</div>
<!-- OVERLAYS -->
<div id="overlay" class="abs" style="left:0;top:0;width:1060px;height:835px;pointer-events:none">
<div class="abs" id="tip" style="left:345px;top:98px;width:123px;height:23px;background:#fff;border:1px solid #9a9a9a;color:#222;font-size:12.500px;line-height:22px;padding-left:4.500px;white-space:nowrap;letter-spacing:.5px"><span id="tiptx">Настройки сборки</span></div>
<svg class="abs" style="left:0;top:0" width="1060" height="835" viewBox="0 0 1060 835"><g fill="#ff0000" stroke="#ff0000"><path d="M357.400 93L348.500 83.500" stroke-width="2.600" fill="none"/><polygon points="341.900,76.600 353.300,81.300 346.800,87.400" stroke="none"/><path d="M480.400 116.900L657 177.200" stroke-width="2.600" fill="none"/><polygon points="668.200,181 652.600,181.300 655.500,172.600" stroke="none"/></g></svg>
</div>
</body>
</html>
